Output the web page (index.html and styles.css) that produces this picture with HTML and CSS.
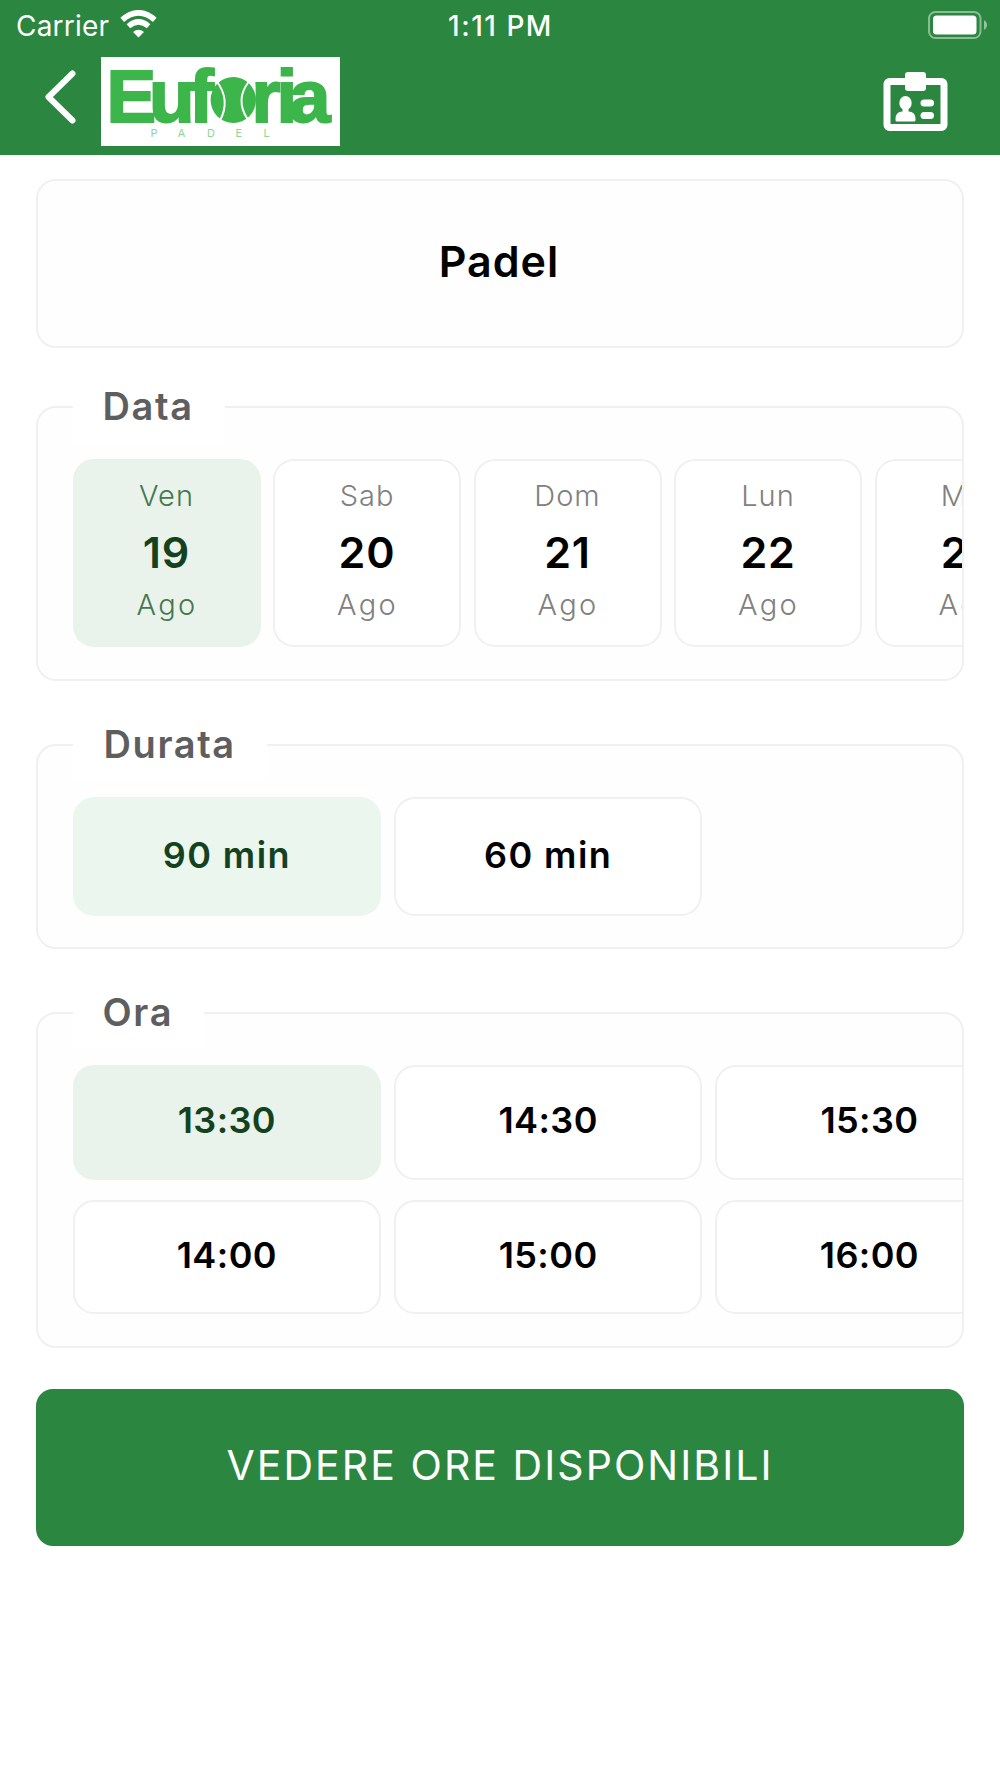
FILE: index.html
```html
<!DOCTYPE html>
<html lang="it">
<head>
<meta charset="utf-8">
<title>Euforia Padel</title>
<link rel="stylesheet" href="styles.css">
</head>
<body>
<header class="header">
  <div class="status">
    <div class="status-left">
      <span class="carrier">Carrier</span>
      <svg class="wifi" width="37" height="28" viewBox="0 0 37 28" fill="none" stroke="#fff">
        <path d="M2.2 9.8Q18.5-4.2 34.8 9.8" stroke-width="5.6"/>
        <path d="M8.4 16.2Q18.5 7.6 28.6 16.2" stroke-width="5.4"/>
        <path d="M13 22q5.500-4.600 11 0l-5.500 5.400z" fill="#fff" stroke="none"/>
      </svg>
    </div>
    <span class="clock">1:11 PM</span>
    <svg class="battery" width="60" height="28" viewBox="0 0 60 28">
      <rect x="1" y="1" width="51.500" height="26" rx="6.500" fill="none" stroke="#fff" stroke-opacity=".45" stroke-width="2"/>
      <rect x="5" y="4.500" width="43.500" height="19" rx="3.500" fill="#fff"/>
      <path d="M56 9.200q3 1.500 3 4.800t-3 4.800z" fill="#fff" fill-opacity=".5"/>
    </svg>
  </div>
  <nav class="nav">
    <svg class="back" width="34" height="56" viewBox="0 0 34 56" fill="none" stroke="#fff" stroke-width="6" stroke-linecap="round" stroke-linejoin="round">
      <path d="M29.500 4.500 5.500 28 29.500 51.500"/>
    </svg>
    <svg class="logo" width="239" height="89" viewBox="0 0 239 89">
      <rect width="239" height="89" fill="#fff"/>
      <text class="logo-name" x="5.500 48 88" y="64.500">Euf</text>
      <text class="logo-name" x="150.500 175.500 188" y="64.500">ria</text>
      <ellipse cx="132.300" cy="43" rx="22.700" ry="23" fill="#3cb54a"/>
      <path d="M115.500 24Q130 43 119 63.500M147.500 25Q134 43 146.500 62" fill="none" stroke="#fff" stroke-width="2"/>
      <text class="logo-sub" x="49.500 76.800 106 134.500 162.500" y="79.700">PADEL</text>
    </svg>
    <svg class="card-icon" width="65" height="60" viewBox="0 0 65 60">
      <rect x="4" y="9.500" width="57" height="46" rx="2.500" fill="none" stroke="#fff" stroke-width="7"/>
      <rect x="22" y="0" width="21" height="19" rx="3" fill="#fff"/>
      <ellipse cx="22.500" cy="31" rx="6.200" ry="7" fill="#fff"/>
      <path d="M19.500 35h6v4.500q7 .3 7 7.500v1q0 1.500-1.500 1.500H14q-1.500 0-1.500-1.500v-1q0-7.200 7-7.500z" fill="#fff"/>
      <rect x="37.500" y="27.500" width="13.500" height="7" rx="3.500" fill="#fff"/>
      <rect x="37.500" y="40" width="13.500" height="7" rx="3.500" fill="#fff"/>
    </svg>
  </nav>
</header>
<main class="main">
  <h1 class="sport">Padel</h1>

  <fieldset class="group group-first">
    <legend class="legend legend-data">Data</legend>
    <div class="scroller">
      <div class="days">
        <div class="tile day selected"><span class="day-text">Ven</span><b class="day-num">19</b><span class="day-text month">Ago</span></div>
        <div class="tile day"><span class="day-text">Sab</span><b class="day-num">20</b><span class="day-text month">Ago</span></div>
        <div class="tile day"><span class="day-text">Dom</span><b class="day-num">21</b><span class="day-text month">Ago</span></div>
        <div class="tile day"><span class="day-text">Lun</span><b class="day-num">22</b><span class="day-text month">Ago</span></div>
        <div class="tile day"><span class="day-text">Mar</span><b class="day-num">23</b><span class="day-text month">Ago</span></div>
      </div>
    </div>
  </fieldset>

  <fieldset class="group group-durata">
    <legend class="legend legend-durata">Durata</legend>
    <div class="scroller">
      <div class="slots durations">
        <div class="tile slot selected light">90 min</div>
        <div class="tile slot">60 min</div>
      </div>
    </div>
  </fieldset>

  <fieldset class="group">
    <legend class="legend legend-ora">Ora</legend>
    <div class="scroller">
      <div class="slots hours">
        <div class="tile slot selected">13:30</div>
        <div class="tile slot">14:30</div>
        <div class="tile slot">15:30</div>
        <div class="tile slot">14:00</div>
        <div class="tile slot">15:00</div>
        <div class="tile slot">16:00</div>
      </div>
    </div>
  </fieldset>

  <button class="submit" type="button">VEDERE ORE DISPONIBILI</button>
</main>
</body>
</html>
```
FILE: styles.css
```css
* { box-sizing: border-box; }

body {
  margin: 0;
  min-height: 1778px;
  background: #fff;
  color: #000;
  font-family: Inter, "Liberation Sans", sans-serif;
}

svg { display: block; }

.header {
  height: 155px;
  background: #2b863f;
  color: #fff;
}

.status {
  display: grid;
  grid-template-columns: 1fr auto 1fr;
  align-items: center;
  height: 50px;
  padding: 0 12px 0 16px;
  font-size: 28px;
}

.status-left {
  display: flex;
  align-items: center;
  gap: 11px;
}

.carrier {
  padding-top: 1px;
  letter-spacing: 0.2px;
}

.wifi { margin-top: -2px; }

.clock {
  padding: 1px 3px 0 0;
  font-weight: 500;
  letter-spacing: 1.5px;
}

.battery { justify-self: end; }

.nav {
  display: flex;
  align-items: flex-start;
  padding: 7px 52px 0 43px;
}

.back { margin-top: 12px; }

.logo { margin-left: 24px; }

.card-icon {
  margin-top: 15px;
  margin-left: auto;
}

.logo-name {
  font: 700 74.5px "Liberation Sans", sans-serif;
  fill: #3cb54a;
  stroke: #3cb54a;
  stroke-width: 2px;
}

.logo-sub {
  font: 400 11px Inter, sans-serif;
  fill: #8ed597;
}

.main { padding: 24px 36px 0; }

.sport {
  display: flex;
  align-items: center;
  justify-content: center;
  height: 169px;
  margin: 0 0 23px;
  padding: 0 2px 6px 0;
  border: 2px solid #f0f0f0;
  border-radius: 20px;
  background: #fefefe;
  font-size: 43px;
  font-weight: 600;
  letter-spacing: 1px;
}

.group {
  min-width: 0;
  margin: 28px 0 0;
  padding: 16px 0 32px 34.5px;
  border: 2px solid #f0f0f0;
  border-radius: 20px;
  background: #fefefe;
}

.group-first { margin-top: 0; }
.group-durata { padding-bottom: 31px; }

.legend {
  height: 72px;
  padding: 0 0 0 30px;
  background: #fff;
  color: #5e5e5e;
  font-size: 38px;
  font-weight: 600;
  line-height: 71px;
  letter-spacing: 1.6px;
}

.legend-data { width: 152px; }
.legend-durata { width: 194px; padding-left: 31px; }
.legend-ora { width: 131px; }

.scroller { overflow: hidden; }

.tile {
  border: 2px solid #f0f0f0;
  border-radius: 21px;
  background: #fff;
}

.selected {
  border-color: #e9f3eb;
  background: #e9f3eb;
  color: #14421f;
}

.light {
  border-color: #ebf6ee;
  background: #ebf6ee;
}

.days {
  display: flex;
  gap: 12.5px;
}

.day {
  display: flex;
  flex: 0 0 188px;
  flex-direction: column;
  align-items: center;
  height: 188px;
  padding-top: 8px;
}

.day-text {
  color: #808080;
  font-size: 29px;
  font-weight: 300;
  line-height: 54px;
  letter-spacing: 1px;
}

.month {
  padding-left: 1px;
  line-height: 46px;
  letter-spacing: 2.4px;
}

.selected .day-text { color: #45774f; }

.day-num {
  font-size: 43px;
  font-weight: 600;
  line-height: 59px;
  letter-spacing: 0.8px;
}

.slots {
  display: grid;
  grid-template-columns: repeat(3, 308.7px);
  gap: 20px 12.6px;
}

.durations {
  grid-auto-rows: 119px;
  letter-spacing: 1.4px;
}

.hours {
  grid-auto-rows: 114.5px;
  letter-spacing: 0.4px;
}

.slot {
  display: flex;
  align-items: center;
  justify-content: center;
  padding-bottom: 4px;
  font-size: 36px;
  font-weight: 600;
}

.submit {
  display: block;
  width: 928px;
  height: 157px;
  margin: 41px 0 0;
  padding: 0 0 5px;
  border: 0;
  border-radius: 17px;
  background: #2b863f;
  color: #fff;
  font-family: inherit;
  font-size: 41px;
  font-weight: 400;
  letter-spacing: 2.05px;
}
```
